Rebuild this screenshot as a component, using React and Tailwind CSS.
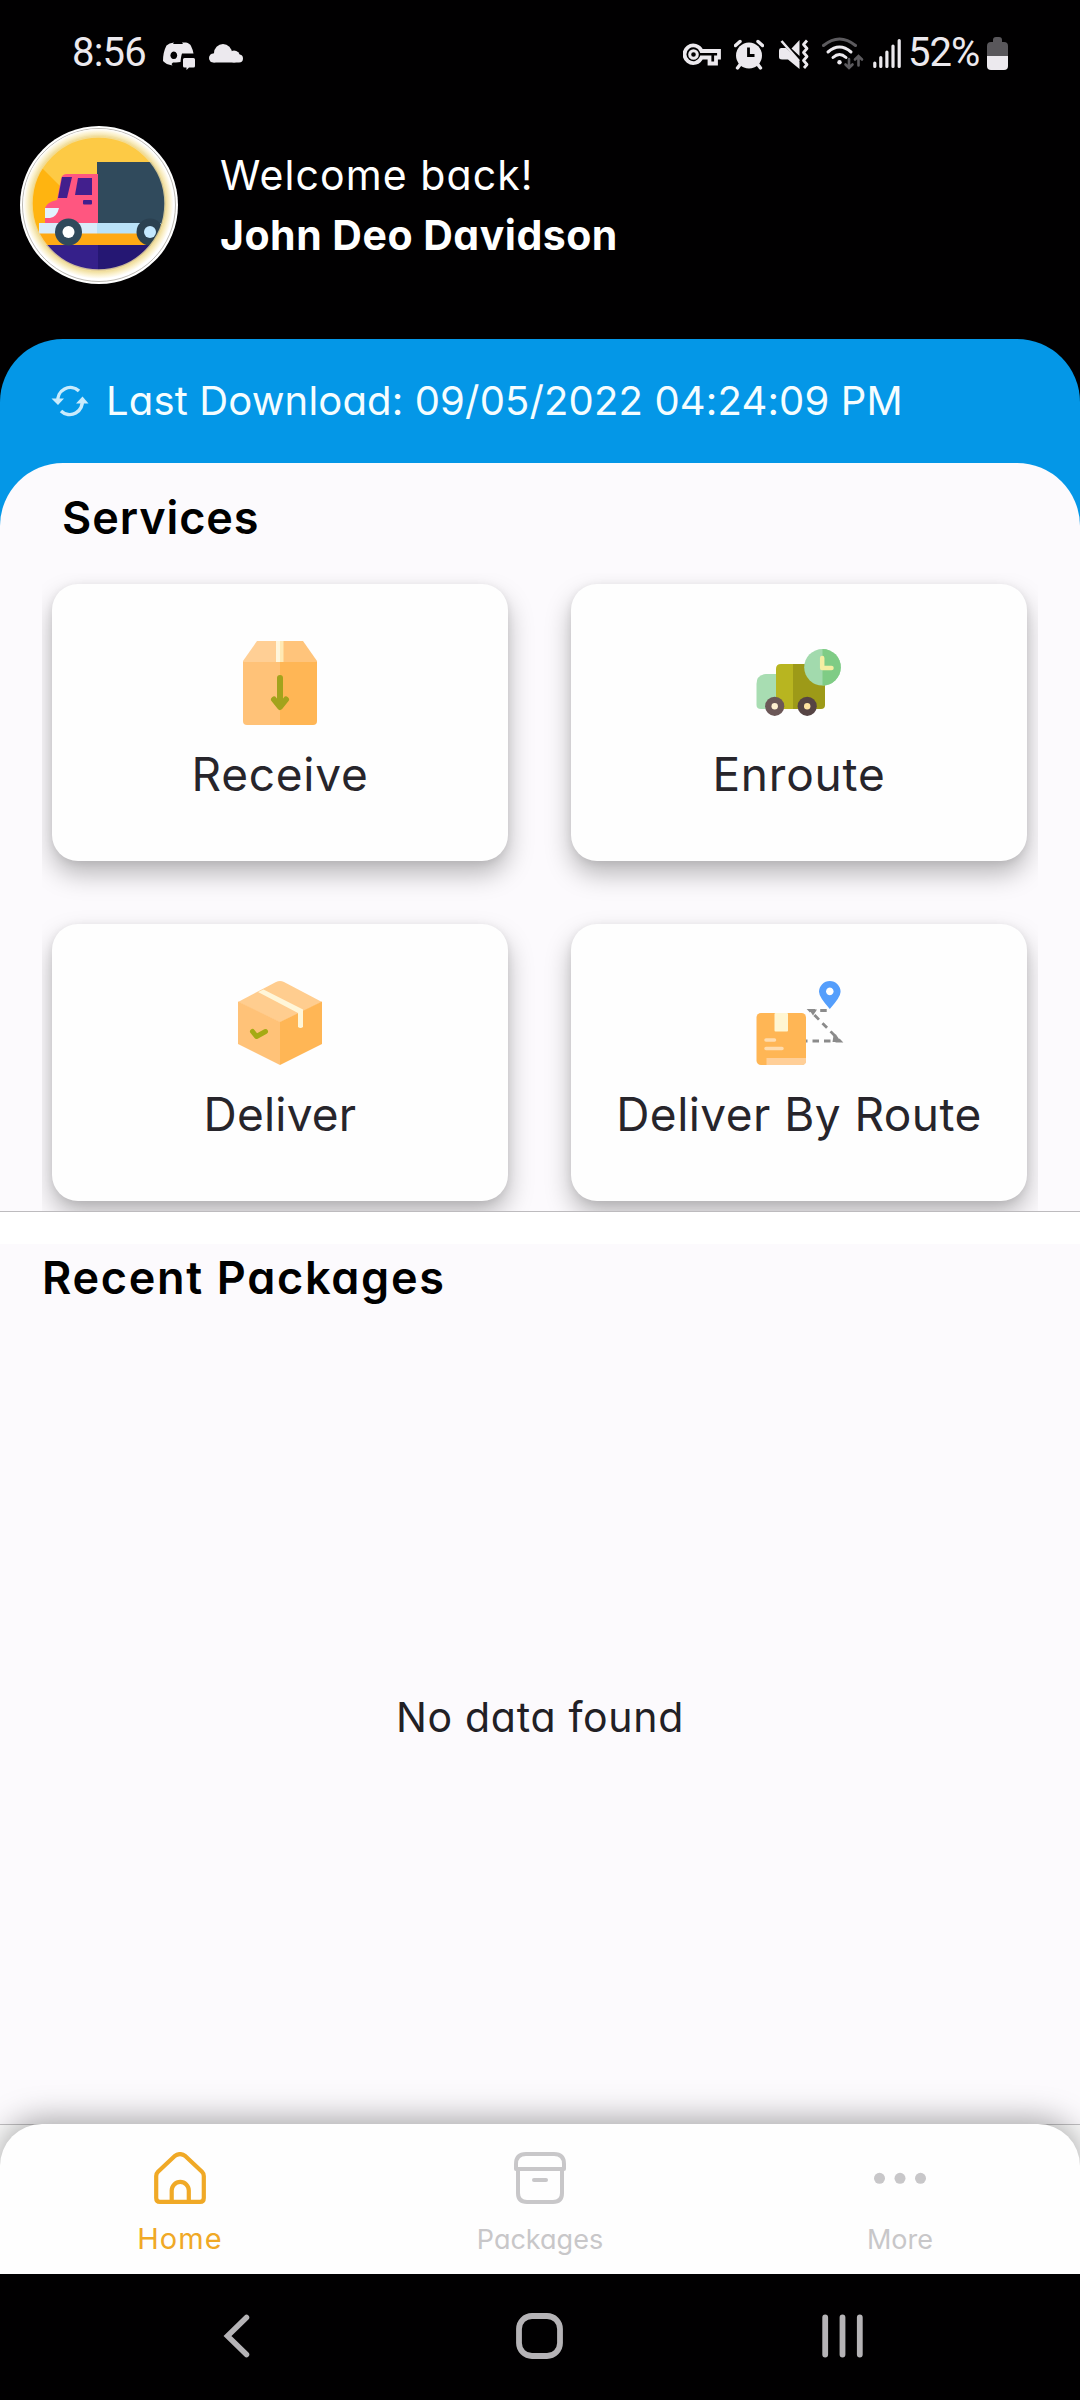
import React, { useState } from 'react';

const TruckAvatar = () => (
    <svg viewBox="0 0 158 158" className="size-[158px] shrink-0">
        <defs>
            <clipPath id="avatarClip"><circle cx="78.5" cy="77.5" r="67" /></clipPath>
            <radialGradient id="avatarRing">
                <stop offset="0.88" stopColor="#ecd78a" />
                <stop offset="0.95" stopColor="#fbf1cd" />
                <stop offset="1" stopColor="#ffffff" />
            </radialGradient>
        </defs>
        <circle cx="79" cy="79" r="79" fill="#fff" />
        <circle cx="79" cy="79" r="76.5" fill="#fff" stroke="#8f8a80" strokeWidth="0.6" />
        <circle cx="78.5" cy="78" r="75" fill="url(#avatarRing)" />
        <g clipPath="url(#avatarClip)">
            <rect width="158" height="158" fill="#ffb410" />
            <path d="M20 40 L80 100 H158 V0 H20Z" fill="#fdca45" />
            <rect y="104" width="158" height="16" fill="#ffa914" />
            <rect y="119" width="78" height="40" fill="#35208a" />
            <rect x="78" y="119" width="80" height="40" fill="#251773" />
            <rect x="77" y="36" width="81" height="62" fill="#304a5c" />
            <path d="M41 53 Q42 48 47 48 H78 V98 H25 V82 Q27 76 37 74Z" fill="#ff5680" />
            <path d="M42 51 H52 L47 72 H38Z" fill="#421f8d" />
            <path d="M58 52 H72 V69 H55Z" fill="#421f8d" />
            <rect x="63" y="74" width="9" height="4.5" rx="1" fill="#421f8d" />
            <path d="M25 82 H39 Q37 91 30 92 H25Z" fill="#e2f3ff" />
            <rect x="19" y="97" width="58" height="10.5" fill="#d9ecfa" />
            <rect x="77" y="97" width="64" height="10.5" fill="#b9e2f8" />
            <circle cx="48.5" cy="106" r="13.5" fill="#304a5c" />
            <circle cx="48.5" cy="106" r="6" fill="#fff" />
            <circle cx="130" cy="106" r="13.5" fill="#2b4151" />
            <circle cx="130" cy="106" r="6" fill="#c3e8ff" />
        </g>
        <circle cx="78.5" cy="77.5" r="67" fill="none" stroke="#f1e0a4" strokeWidth="2.5" opacity="0.8" />
    </svg>
);

const ReceiveIcon = () => (
    <svg viewBox="0 0 84 84" className="size-[84px]">
        <path d="M19 0 H42 V22 H5 V20Z" fill="#ffcf95" />
        <path d="M42 0 H65 L79 20 V22 H42Z" fill="#ffc47b" />
        <path d="M5 21 H42 V84 H9 Q5 84 5 80Z" fill="#ffc278" />
        <path d="M42 21 H79 V80 Q79 84 75 84 H42Z" fill="#ffb655" />
        <rect x="38" width="4" height="21" fill="#fff6dc" />
        <rect x="42" width="3.5" height="21" fill="#ffe9b4" />
        <path d="M42 37 V65 M36 58.5 L42 66 L48 58.5" fill="none" stroke="#a3a31c" strokeWidth="6" strokeLinecap="round" strokeLinejoin="round" />
    </svg>
);

const EnrouteIcon = () => (
    <svg viewBox="0 0 84 84" className="size-[84px] overflow-visible">
        <path d="M20 33 H9 Q-0.5 34 -0.5 43 V64 Q-0.5 68 4 68 H20Z" fill="#a8ddb2" />
        <path d="M36.5 23 H24 Q19 23 19 28 V68 H36.5Z" fill="#b8b520" />
        <path d="M36 23 H68 V64 Q68 68 64 68 H36Z" fill="#9d9a18" />
        <circle cx="17.7" cy="65.3" r="9.6" fill="#6b5757" />
        <circle cx="17.7" cy="65.3" r="3.2" fill="#fff0d0" />
        <circle cx="50.2" cy="65.3" r="9.6" fill="#564444" />
        <circle cx="50.2" cy="65.3" r="3.2" fill="#ffe2a0" />
        <circle cx="65.5" cy="26.3" r="18.3" fill="#a2daad" />
        <path d="M65.5 8 A18.3 18.3 0 0 1 65.5 44.6Z" fill="#7fcc85" />
        <path d="M65.2 17 V27 H74.5" fill="none" stroke="#f5eea2" strokeWidth="4.5" strokeLinecap="round" strokeLinejoin="round" />
    </svg>
);

const DeliverIcon = () => (
    <svg viewBox="0 0 84 84" className="size-[84px]">
        <path d="M38 1 Q42 -1 46 1 L84 21 L42 41.5 L0 21Z" fill="#ffcd8f" />
        <path d="M0 20.5 L42 41 V84 L0 63Z" fill="#ffc278" />
        <path d="M84 20.5 L42 41 V84 L84 63Z" fill="#ffb655" />
        <path d="M20 11 L25.5 8.5 L65 28.5 V46 Q62.5 48 60 46 V32Z" fill="#fff6d8" />
        <path d="M14.5 50.5 L18.5 55.5 L27.5 50.5" fill="none" stroke="#a5aa14" strokeWidth="5" strokeLinecap="round" strokeLinejoin="round" />
    </svg>
);

const RouteIcon = () => (
    <svg viewBox="0 0 84 84" className="size-[84px] overflow-visible">
        <rect x="-0.5" y="32" width="49.5" height="52" rx="4.5" fill="#ffb655" />
        <path d="M9.5 77 H49 V80 Q49 84 45 84 H9.5Z" fill="#ffcf98" />
        <rect x="17.5" y="32" width="13.5" height="18.5" rx="1" fill="#fff6d2" />
        <path d="M9 59 H17.5 M9 67.5 H25" stroke="#ffdcae" strokeWidth="3.5" strokeLinecap="round" />
        <path d="M49 60 H83 L53 29.5 H71" fill="none" stroke="#8b8b8b" strokeWidth="2.8" strokeDasharray="6.5 5" strokeDashoffset="5" />
        <path d="M52 28.5 H60 L56 34.5Z M76.5 54.5 L79 53.5 L84 61 H75.5Z" fill="#8b8b8b" />
        <path fillRule="evenodd" d="M72.8 28 Q62 16 62 10.8 A10.8 10.8 0 0 1 83.6 10.8 Q83.6 16 72.8 28Z M72.8 6.6 a3.8 3.8 0 1 0 0.01 0Z" fill="#549efc" />
    </svg>
);

const HomeIcon = () => (
    <svg viewBox="0 0 52 52" className="size-[52px]" fill="none" stroke="currentColor" strokeWidth="4.2" strokeLinejoin="round">
        <path d="M2.2 24 Q2.2 21.5 4 19.7 L20.5 4.2 Q26 0 31.5 4.2 L48 19.7 Q49.8 21.5 49.8 24 V46 Q49.8 49.9 46 49.9 H6 Q2.2 49.9 2.2 46Z" />
        <path d="M17.7 49.5 V38.5 A8.5 8.5 0 0 1 34.8 38.5 V49.5" />
    </svg>
);

const PackagesIcon = () => (
    <svg viewBox="0 0 52 52" className="size-[52px]" fill="none" stroke="currentColor" strokeWidth="4" strokeLinejoin="round">
        <path d="M2 17 V12 Q2 2 12 2 H40 Q50 2 50 12 V17 H2Z" />
        <path d="M4 17 V41 Q4 50 13 50 H39 Q48 50 48 41 V17" />
        <path d="M20 28 H32" strokeLinecap="round" />
    </svg>
);

const MoreIcon = () => (
    <svg viewBox="0 0 52 52" className="size-[52px]" fill="currentColor">
        <circle cx="5.5" cy="26.3" r="5.5" />
        <circle cx="26" cy="26.3" r="5.5" />
        <circle cx="46.5" cy="26.3" r="5.5" />
    </svg>
);

const services = [
    { label: 'Receive', icon: ReceiveIcon, tracking: 'tracking-[0.75px]' },
    { label: 'Enroute', icon: EnrouteIcon, tracking: 'tracking-[0.8px]' },
    { label: 'Deliver', icon: DeliverIcon, tracking: 'tracking-[0.2px]' },
    { label: 'Deliver By Route', icon: RouteIcon, tracking: 'tracking-[0.45px]' },
];

const tabs = [
    { label: 'Home', icon: HomeIcon, text: 'text-[29px] tracking-[1.1px]' },
    { label: 'Packages', icon: PackagesIcon, text: 'text-[27px] translate-y-px' },
    { label: 'More', icon: MoreIcon, text: 'text-[27px] translate-y-px' },
];

const StatusBar = () => (
    <div className="h-[106px] flex items-center justify-between px-[72px] text-[#ece9ee] font-['Roboto',sans-serif]">
        <div className="flex items-center">
            <span className="w-[91px] text-[40px] leading-none tracking-[-0.8px]">8:56</span>
            <svg viewBox="0 0 32 34" className="w-8 h-[34px]" fill="currentColor">
                <path fillRule="evenodd" d="M11 6.5 L10 8 H20 L19 6.5 L23 6.5 Q27 7.5 28 10 Q30 14 30.5 17.5 H19 Q18 20 17.5 26 L13 26.5 H10 L8.5 28 L9.5 29.5 Q3 28.5 0 25 Q0 16 3.5 9.5 Q6 7 11 6.5Z M10.8 15.5 a3.4 3.8 0 1 0 0.01 0Z" />
                <path d="M21.5 22 H30.5 Q32 22 32 23.5 V30 Q32 31.5 30.5 31.5 H26 L23.5 34 V31.5 H21.5 Q20 31.5 20 30 V23.5 Q20 22 21.5 22Z" />
            </svg>
            <svg viewBox="0 0 34 34" className="w-[34px] h-[34px] ml-3.5" fill="currentColor">
                <circle cx="14" cy="17" r="9" />
                <circle cx="4.5" cy="22" r="4.5" />
                <circle cx="25" cy="20.500" r="6" />
                <path d="M4.5 26.500 H30 A4 4 0 0 0 30 18.500 L14 14 L4.500 17.500Z" />
            </svg>
        </div>
        <div className="flex items-center">
            {/* vpn key */}
            <svg viewBox="0 0 38 34" className="w-[38px] h-[34px]" fill="none" stroke="currentColor" strokeWidth="3.8">
                <path d="M18.5 15 H36 V21.5 H33 V27.5 H26.5 V21.5 H18.5 A8.8 8.8 0 1 1 18.5 15Z" />
                <circle cx="10.5" cy="18.5" r="3.8" strokeWidth="3" />
            </svg>
            {/* alarm */}
            <svg viewBox="0 0 30 34" className="w-[30px] h-[34px] ml-[13px]">
                <path d="M1.5 9.5 L6 5.5 M28.5 9.5 L24 5.5 M6.5 28 L3.5 32 M23.5 28 L26.5 32" stroke="currentColor" strokeWidth="3.4" strokeLinecap="round" />
                <circle cx="15" cy="19.5" r="13" fill="currentColor" />
                <path d="M14.5 11.5 V19.5 H20.5" fill="none" stroke="#000" strokeWidth="2.8" />
            </svg>
            {/* muted with vibration */}
            <svg viewBox="0 0 30 34" className="w-[30px] h-[34px] ml-[15px]">
                <path d="M20.5 4 V20 L12.500 12.500Z" fill="currentColor" />
                <path d="M2 12 H7 L20.5 25.5 V33 L9 23.5 H3 Q0 23.5 0 21 V14.5 Q0 12 2 12Z" fill="currentColor" />
                <path d="M2.5 5 L20 25" stroke="currentColor" strokeWidth="2.6" />
                <path d="M28 4.5 L24.5 8.5 L28 12.5 L24.5 16.5 L28 20.5 L24.5 24.5 L28 28.5 L25 32" fill="none" stroke="currentColor" strokeWidth="2.8" strokeLinejoin="round" />
            </svg>
            {/* wifi */}
            <svg viewBox="0 0 42 34" className="w-[42px] h-[34px] ml-[13px]" fill="none" stroke="currentColor" strokeWidth="3" strokeLinecap="round">
                <path d="M1.5 9.5 Q17.5 -3.5 33.5 9.5" stroke="#5c5a5e" />
                <path d="M6 16 Q17.5 6 29 16 M11 21.5 Q17.5 15.5 24 21.5" />
                <circle cx="17.5" cy="26.3" r="2.2" fill="currentColor" stroke="none" />
                <path d="M27 23 V31.5 M23.5 28.5 L27 32 L30.5 28.5 M36.5 29.5 V20.5 M33 23.5 L36.5 20 L40 23.5" stroke="#5c5a5e" strokeWidth="2.6" />
            </svg>
            {/* signal */}
            <svg viewBox="0 0 28 34" className="w-7 h-[34px] ml-[9px]" stroke="currentColor" strokeWidth="3.2" strokeLinecap="round">
                <path d="M1.8 27 V30.5 M7.8 21.5 V30.5 M13.9 16 V30.5 M20 10 V30.5 M26.2 4.5 V30.5" />
            </svg>
            <span className="w-[79px] ml-[7px] text-[40px] leading-none tracking-[-1px]">52%</span>
            <svg viewBox="0 0 21 34" className="w-[21px] h-[34px]">
                <path d="M6 4 Q6 1 9 1 H12 Q15 1 15 4 V6 H17 Q21 6 21 10 V20 H0 V10 Q0 6 4 6 H6Z" fill="#59575b" />
                <path d="M0 20 H21 V30 Q21 34 17 34 H4 Q0 34 0 30Z" fill="currentColor" />
            </svg>
        </div>
    </div>
);

const ServiceCard = ({ label, icon: Icon, tracking }) => (
    <button type="button" className="h-[277px] pt-[57px] flex flex-col items-center bg-[#fefefe] rounded-[26px] shadow-[0_13px_26px_rgba(0,0,0,0.27),0_2px_8px_rgba(0,0,0,0.08)]">
        <Icon />
        <span className={`mt-[15px] text-[46px] leading-[68px] text-[#27252b] ${tracking}`}>{label}</span>
    </button>
);

const App = () => {
    const [activeTab, setActiveTab] = useState('Home');

    return (
        <div className="w-[1080px] h-[2400px] flex flex-col overflow-hidden bg-[#010001] font-['Inter',sans-serif] [font-feature-settings:'cv11']">
            <StatusBar />

            <header className="flex items-center gap-[42px] pt-5 pb-[55px] pl-5 text-white">
                <TruckAvatar />
                <div className="text-[41px] leading-[60px]">
                    <p className="tracking-[1.1px]">Welcome back!</p>
                    <p className="font-bold tracking-[0.5px]">John Deo Davidson</p>
                </div>
            </header>

            <main className="flex-1 flex flex-col rounded-t-[63px] bg-[#0497e7]">
                <div className="h-[124px] flex items-center gap-[17px] pl-[51px] text-[#f5fdff]">
                    <svg viewBox="0 0 38 32" className="w-[38px] h-8 text-[#c9ebfc]" fill="none" stroke="currentColor" strokeWidth="3.4">
                        <path d="M7 17 A12.5 12.5 0 0 1 28 6 M31 14.5 A12.5 12.5 0 0 1 10 26" />
                        <path d="M0.5 13.5 H13 L7 20Z M25 18.5 L31.5 11.5 L37.5 18.5Z" fill="currentColor" stroke="none" />
                    </svg>
                    <span className="text-[40px] tracking-[0.15px]">Last Download: 09/05/2022 04:24:09 PM</span>
                </div>

                <section className="h-[749px] flex flex-col rounded-t-[63px] bg-[#fcfafd] border-b border-[#bdbbbe]">
                    <h2 className="pl-[62px] text-[45px] leading-[110px] font-semibold tracking-[0.9px] text-black">Services</h2>
                    <div className="flex-1 mx-[42px] pl-2.5 pr-[11px] pt-[11px] overflow-hidden grid grid-cols-2 gap-[63px] content-start">
                        {services.map(service => (
                            <ServiceCard key={service.label} {...service} />
                        ))}
                    </div>
                </section>

                <section className="flex-1 flex flex-col border-t-[32px] border-white bg-[#fcfafd]">
                    <h2 className="pl-[42px] text-[45px] leading-[67px] font-semibold tracking-[1.7px] text-black">Recent Packages</h2>
                    <p className="flex-1 flex items-center justify-center text-[41px] tracking-[0.7px] text-[#222025]">No data found</p>
                </section>

                <div className="border-t border-[#c2c1c3] bg-[#fdfdfd]">
                    <nav className="-mt-px h-[150px] pt-7 grid grid-cols-3 rounded-t-[42px] bg-[#fefefe] shadow-[0_-4px_32px_rgba(0,0,0,0.36)]">
                        {tabs.map(({ label, icon: Icon, text }) => (
                            <button
                                key={label}
                                type="button"
                                onClick={() => setActiveTab(label)}
                                className={`flex flex-col items-center ${activeTab === label ? 'text-[#f0a926]' : 'text-[#c8c7c9]'}`}
                            >
                                <Icon />
                                <span className={`mt-[15px] leading-10 ${text}`}>{label}</span>
                            </button>
                        ))}
                    </nav>
                </div>
            </main>

            {/* Android navigation bar */}
            <div className="relative h-[126px] flex items-center justify-between pl-[223px] pr-[217px] pb-[3px] bg-[#010001] text-[#b5b3b6]">
                <svg viewBox="0 0 34 46" className="w-[34px] h-[46px]" fill="none" stroke="currentColor" strokeWidth="5.5" strokeLinecap="round">
                    <path d="M23.5 4.5 L4.5 23 L23.5 41.5" />
                </svg>
                <svg viewBox="0 0 47 46" className="w-[47px] h-[46px]" fill="none" stroke="currentColor" strokeWidth="5.8">
                    <rect x="3" y="3" width="41" height="40" rx="13" />
                </svg>
                <svg viewBox="0 0 41 46" className="w-[41px] h-[46px]" stroke="currentColor" strokeWidth="5.8" strokeLinecap="round">
                    <path d="M3.2 4.5 V41.5 M20.5 4.5 V41.5 M37.8 4.5 V41.5" />
                </svg>
            </div>
        </div>
    );
};

export default App;
